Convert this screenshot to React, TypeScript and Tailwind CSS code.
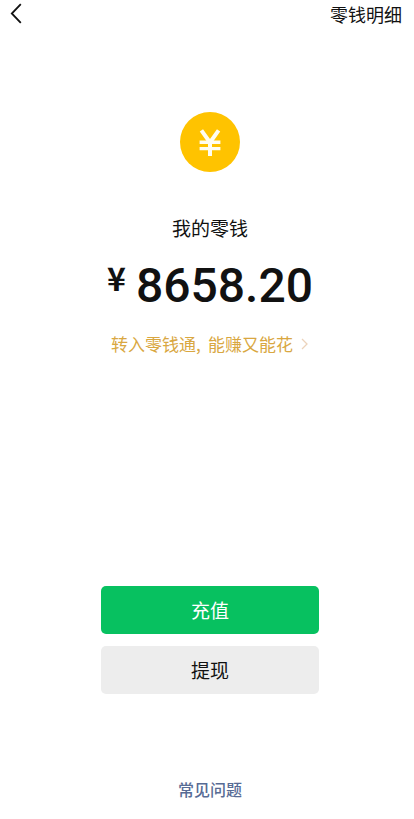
import React from "react";

function CoinIcon() {
  return (
    <svg viewBox="0 0 60 60" className="size-[60px]" aria-hidden="true">
      <circle cx="30" cy="30" r="30" fill="#ffc300" />
      <g fill="none" stroke="#fffdf2" strokeWidth="4">
        <path d="M21.4 18.4 30 30.5 38.6 18.4" />
        <path strokeWidth="3.4" d="M19.6 30.2h20.8M19.6 36.6h20.8" />
        <path d="M30 29.5v14.5" />
      </g>
    </svg>
  );
}

function Header() {
  return (
    <header className="flex h-7 items-center justify-between pr-3 pl-2">
      <button type="button" aria-label="返回" className="flex h-7 w-6 items-center">
        <svg viewBox="0 0 16 22" className="h-[22px] w-4" fill="none" stroke="#111" strokeWidth="1.8" aria-hidden="true">
          <path d="M12.8 1.2 3.8 10.5l9 9.3" />
        </svg>
      </button>
      <a href="#details" className="text-lg leading-7 text-[#111]">零钱明细</a>
    </header>
  );
}

export default function App() {
  return (
    <div className="min-h-screen bg-white font-['Noto_Sans_CJK_SC',sans-serif] text-[#111]">
      <Header />
      <main className="flex flex-col items-center pt-[84px] pl-1.5">
        <CoinIcon />
        <h1 className="mt-10 text-[19px] leading-8">我的零钱</h1>
        <p className="mt-3 flex items-start font-medium">
          <span className="mr-2.5 text-[32px] leading-[42px] font-bold">¥</span>
          <span className="font-['Roboto',sans-serif] text-[48px] leading-[60px]">8658.20</span>
        </p>
        <a href="#transfer" className="mt-4 flex items-center text-[17px] leading-6 text-[#d9a741]">
          <span>转入零钱通<span className="inline-block w-3">,</span>能赚又能花</span>
          <svg viewBox="0 0 8 12" className="ml-2 h-3 w-2" fill="none" stroke="#ecd3bb" strokeWidth="1.3" aria-hidden="true">
            <path d="M1 1l5 5-5 5" />
          </svg>
        </a>
        <div className="mt-[230px] flex w-[218px] flex-col gap-3 text-[19px]">
          <button type="button" className="h-12 rounded-[5px] bg-[#07c160] text-white">充值</button>
          <button type="button" className="h-12 rounded-[5px] bg-[#ededed]">提现</button>
        </div>
        <a href="#faq" className="mt-[83px] text-base leading-6 font-medium text-[#576b95]">常见问题</a>
      </main>
    </div>
  );
}
